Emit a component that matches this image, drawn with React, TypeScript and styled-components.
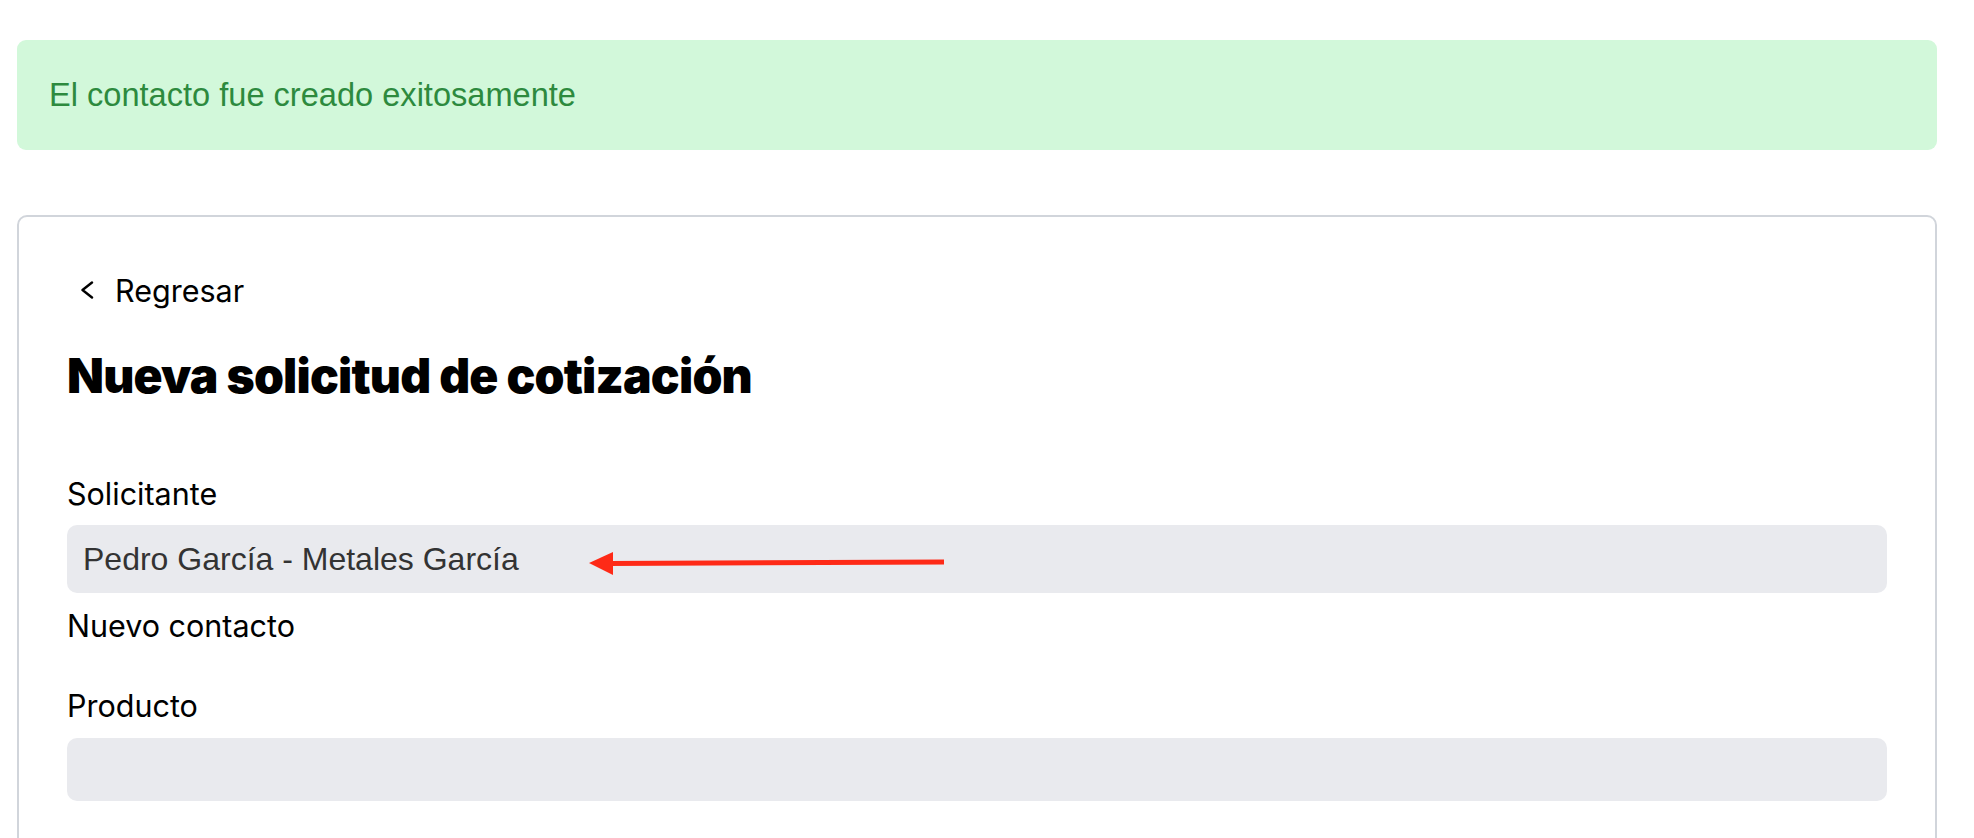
import React from "react";
import styled, { createGlobalStyle } from "styled-components";

const GlobalStyle = createGlobalStyle`
  html, body { margin: 0; padding: 0; background: #ffffff; }
  body { font-family: Inter, "Noto Sans", sans-serif; color: #000; }
  * { box-sizing: border-box; }
`;

const Page = styled.div`
  padding: 40px 37px 0 17px;
  display: flex;
  flex-direction: column;
  gap: 65px;
  height: 838px;
  overflow: hidden;
`;

const Alert = styled.div`
  flex-shrink: 0;
  height: 110px;
  display: flex;
  align-items: center;
  padding-left: 32px;
  background: #d2f8da;
  border-radius: 9px;
  color: #2d8a3e;
  font-family: "Liberation Sans", Arial, sans-serif;
  font-size: 32.6px;
`;

const Card = styled.section`
  flex-shrink: 0;
  border: 2px solid #d1d5db;
  border-radius: 10px;
  padding: 53px 48px 0 48px;
  min-height: 900px;
  display: flex;
  flex-direction: column;
`;

const BackLink = styled.a`
  display: flex;
  align-items: center;
  gap: 21px;
  height: 40px;
  padding-left: 13px;
  font-size: 30.5px;
  color: #000;
  text-decoration: none;
  cursor: pointer;
`;

const Title = styled.h1`
  margin: 38px 0 0 0;
  font-size: 48px;
  line-height: 56px;
  font-weight: 900;
  letter-spacing: -0.8px;
`;

const Form = styled.div`
  margin-top: 70px;
  display: flex;
  flex-direction: column;
`;

const Label = styled.label<{ $top?: number }>`
  display: block;
  margin-top: ${(p) => p.$top ?? 0}px;
  font-size: 30.5px;
  line-height: 40px;
  color: #000;
`;

const FieldWrap = styled.div<{ $top: number }>`
  position: relative;
  margin-top: ${(p) => p.$top}px;
`;

const Input = styled.div<{ $h: number }>`
  height: ${(p) => p.$h}px;
  background: #e9eaee;
  border-radius: 10px;
  display: flex;
  align-items: center;
  padding-left: 16px;
  font-family: "Liberation Sans", Arial, sans-serif;
  font-size: 32px;
  color: #333333;
`;

const Arrow = styled.svg`
  position: absolute;
  left: 520px;
  top: 25px;
  pointer-events: none;
`;

export default function App() {
  return (
    <>
      <GlobalStyle />
      <Page>
        <Alert>El contacto fue creado exitosamente</Alert>
        <Card>
          <BackLink>
            <svg width="14" height="18" viewBox="0 0 14 18" fill="none">
              <polyline
                points="12,1.5 2.5,9 12,16.5"
                stroke="#000"
                strokeWidth="2.4"
                strokeLinecap="round"
                strokeLinejoin="round"
              />
            </svg>
            Regresar
          </BackLink>
          <Title>Nueva solicitud de cotización</Title>
          <Form>
            <Label>Solicitante</Label>
            <FieldWrap $top={11}>
              <Input $h={68}>Pedro García - Metales García</Input>
              <Arrow width="360" height="26" viewBox="0 0 360 26">
                <polygon points="2,13 26,2 26,25" fill="#fe2a17" />
                <line x1="22" y1="13.5" x2="357" y2="12" stroke="#fe2a17" strokeWidth="5" />
              </Arrow>
            </FieldWrap>
            <Label $top={13}>Nuevo contacto</Label>
            <Label $top={40}>Producto</Label>
            <FieldWrap $top={12}>
              <Input $h={63} />
            </FieldWrap>
          </Form>
        </Card>
      </Page>
    </>
  );
}
